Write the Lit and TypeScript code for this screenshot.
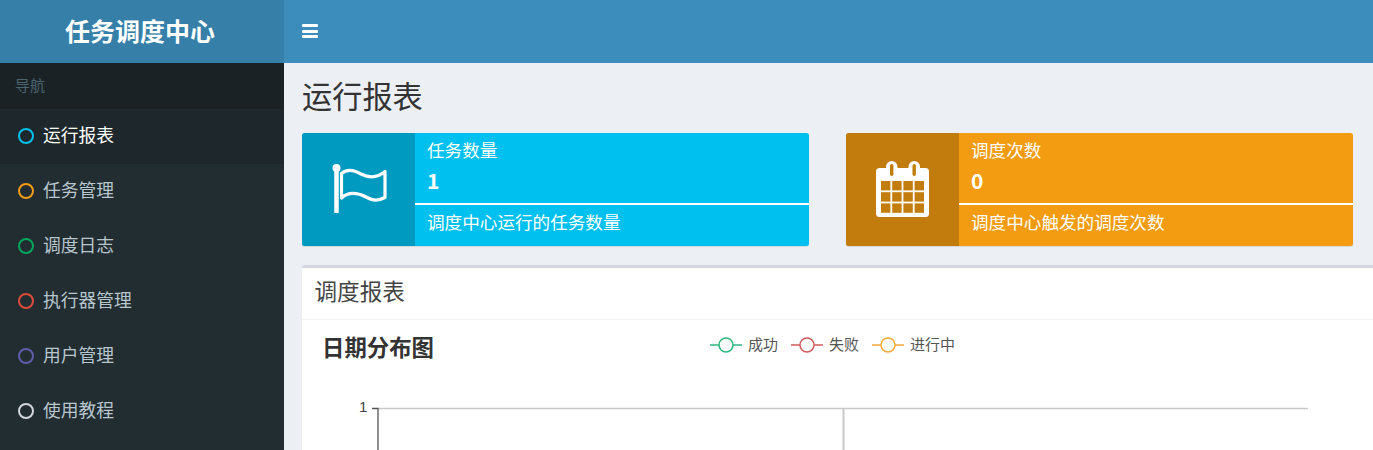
import { LitElement, html, css, svg } from "lit";
import { customElement } from "lit/decorators.js";

const MENU = [
  { label: "运行报表", color: "#00c0ef", active: true },
  { label: "任务管理", color: "#f39c12" },
  { label: "调度日志", color: "#00a65a" },
  { label: "执行器管理", color: "#dd4b39" },
  { label: "用户管理", color: "#605ca8" },
  { label: "使用教程", color: "#d2d6de" },
];

const LEGEND = [
  { label: "成功", color: "#2fb67c" },
  { label: "失败", color: "#cf5c5c" },
  { label: "进行中", color: "#f5a93b" },
];

const flagIcon = html`<svg class="ico" width="60" height="60" viewBox="0 0 60 60" fill="none" stroke="#fff">
  <circle cx="6.5" cy="8" r="4" fill="#fff" stroke="none"></circle>
  <path d="M6.5 8V53" stroke-width="4.5"></path>
  <path stroke-width="3.2" stroke-linejoin="round" d="M11.5 13.5C16 9.5 23 9.5 31 14C40 18.5 48 17.5 55 11.5V37.5C48 41 44 41 36 37C27 32.5 18 32 11.5 38Z"></path>
</svg>`;

const calendarCells = [0, 1, 2, 3].flatMap((c) =>
  [0, 1, 2].map((r) => svg`<rect x=${7 + c * 11.2} y=${21 + r * 11.2} width="9.4" height="9.4"></rect>`)
);

const calendarIcon = html`<svg class="ico" width="60" height="60" viewBox="0 0 60 60">
  <rect x="2" y="8" width="53" height="49" rx="3.5" fill="#fff"></rect>
  <rect x="12" y="1" width="11.5" height="16" rx="5.7" fill="#fff"></rect>
  <rect x="34.5" y="1" width="11.5" height="16" rx="5.7" fill="#fff"></rect>
  <g fill="#c27d0e">
    <rect x="16" y="4" width="3.4" height="12" rx="1.7"></rect>
    <rect x="38.5" y="4" width="3.4" height="12" rx="1.7"></rect>
    ${calendarCells}
  </g>
</svg>`;

@customElement("app-root")
export class AppRoot extends LitElement {
  static styles = css`
    :host {
      display: flex;
      width: 100%;
      height: 450px;
      overflow: hidden;
      background: #ecf0f5;
      font-family: "Noto Sans CJK SC", "Liberation Sans", sans-serif;
      color: #333;
    }
    .side {
      width: 284px;
      flex: none;
      background: #222d32;
      display: flex;
      flex-direction: column;
    }
    .logo {
      height: 63px;
      box-sizing: border-box;
      padding: 0 4px 4px 0;
      flex: none;
      background: #367fa9;
      color: #fff;
      font-size: 25px;
      font-weight: 700;
      display: flex;
      align-items: center;
      justify-content: center;
    }
    .nav-label {
      height: 46px;
      box-sizing: border-box;
      padding: 0 0 4px 15px;
      flex: none;
      background: #1a2226;
      color: #4b646f;
      font-size: 15px;
      display: flex;
      align-items: center;
    }
    .item {
      height: 55px;
      box-sizing: border-box;
      flex: none;
      display: flex;
      align-items: center;
      padding: 0 0 1px 18px;
      gap: 9px;
      color: #b8c7ce;
      font-size: 17.75px;
    }
    .item.active {
      background: #1e282c;
      color: #fff;
    }
    .item-label {
      margin-bottom: 5px;
    }
    .dot {
      width: 16px;
      height: 16px;
      box-sizing: border-box;
      border: 2.85px solid;
      border-radius: 50%;
      flex: none;
    }
    .main {
      flex: 1;
      min-width: 0;
      display: flex;
      flex-direction: column;
    }
    .top {
      height: 63px;
      box-sizing: border-box;
      padding: 0 0 1px 18px;
      flex: none;
      background: #3c8dbc;
      display: flex;
      align-items: center;
    }
    .bars {
      width: 16px;
      display: flex;
      flex-direction: column;
      gap: 2.5px;
    }
    .bars i {
      display: block;
      height: 3px;
      background: #fff;
      border-radius: 1px;
    }
    .content {
      padding: 0 20px 0 18px;
    }
    h1 {
      margin: 0;
      height: 70px;
      font-size: 30.2px;
      font-weight: 400;
      line-height: 65px;
      color: #333;
    }
    .cards {
      display: grid;
      grid-template-columns: 1fr 1fr;
      gap: 37px;
    }
    .card {
      height: 113px;
      display: flex;
      border-radius: 2.5px;
      overflow: hidden;
      color: #fff;
      box-shadow: 0 1px 1px rgba(0, 0, 0, 0.1);
    }
    .card.info { background: #00c0ef; }
    .card.warn { background: #f39c12; }
    .card-icon {
      width: 113px;
      flex: none;
      background: rgba(0, 0, 0, 0.2);
      display: flex;
      align-items: center;
      justify-content: center;
    }
    .card.info .ico { margin: 1px 0 0 3px; }
    .card.warn .ico { margin: 1px 0 0 3px; }
    .card-body {
      flex: 1;
      min-width: 0;
      display: flex;
      flex-direction: column;
    }
    .card-text {
      height: 35px;
      padding: 0 12px 0 13px;
      margin-left: -1px;
      font-size: 17.6px;
      line-height: 34px;
    }
    .card-num {
      height: 35px;
      padding: 0 12px 0 13px;
      margin-left: -1px;
      font-size: 21px;
      font-weight: 700;
      line-height: 25px;
    }
    .card-line {
      height: 2px;
      background: #fff;
    }
    .card-desc {
      padding: 0 12px 0 13px;
      margin-left: -1px;
      font-size: 17.6px;
      line-height: 34px;
    }
    .box {
      margin: 19px -20px 0 0;
      background: #fff;
      border-top: 3px solid #d2d6de;
      border-radius: 3px 0 0 3px;
      box-shadow: 0 1px 1px rgba(0, 0, 0, 0.1);
    }
    .box-head {
      height: 52px;
      box-sizing: border-box;
      border-bottom: 1px solid #f4f4f4;
      padding-left: 12.5px;
      font-size: 22.6px;
      line-height: 46px;
      color: #444;
    }
    .chart-head {
      height: 53px;
      display: flex;
      align-items: center;
      padding-left: 20px;
    }
    .chart-title {
      width: 388px;
      font-size: 22.4px;
      font-weight: 700;
      color: #333;
      margin-top: -2px;
    }
    .legend {
      display: flex;
      gap: 13px;
      margin-top: -4px;
      font-size: 15px;
      color: #555;
    }
    .leg {
      display: flex;
      align-items: center;
      gap: 6px;
    }
    .leg span {
      margin-bottom: 2px;
    }
    .plot {
      display: block;
    }
    .tick {
      font-family: "Liberation Sans", sans-serif;
      font-size: 15px;
      fill: #444;
    }
  `;

  render() {
    return html`
      <aside class="side">
        <div class="logo">任务调度中心</div>
        <div class="nav-label">导航</div>
        ${MENU.map(
          (m) => html`<div class="item ${m.active ? "active" : ""}">
            <span class="dot" style="border-color:${m.color}"></span><span class="item-label">${m.label}</span>
          </div>`
        )}
      </aside>
      <div class="main">
        <header class="top"><div class="bars"><i></i><i></i><i></i></div></header>
        <section class="content">
          <h1>运行报表</h1>
          <div class="cards">
            <div class="card info">
              <div class="card-icon">${flagIcon}</div>
              <div class="card-body">
                <div class="card-text">任务数量</div>
                <div class="card-num">1</div>
                <div class="card-line"></div>
                <div class="card-desc">调度中心运行的任务数量</div>
              </div>
            </div>
            <div class="card warn">
              <div class="card-icon">${calendarIcon}</div>
              <div class="card-body">
                <div class="card-text">调度次数</div>
                <div class="card-num">0</div>
                <div class="card-line"></div>
                <div class="card-desc">调度中心触发的调度次数</div>
              </div>
            </div>
          </div>
          <div class="box">
            <div class="box-head">调度报表</div>
            <div class="chart-head">
              <div class="chart-title">日期分布图</div>
              <div class="legend">
                ${LEGEND.map(
                  (l) => html`<span class="leg">
                    <svg width="32" height="16" viewBox="0 0 32 16" fill="none" stroke=${l.color} stroke-width="1.5">
                      <path d="M0 8H32"></path>
                      <circle cx="16" cy="8" r="7" fill="#fff"></circle>
                    </svg><span>${l.label}</span>
                  </span>`
                )}
              </div>
            </div>
            <svg class="plot" width="1071" height="80" viewBox="0 0 1071 80" fill="none">
              <text class="tick" x="57" y="39">1</text>
              <path d="M76 35.5H1006" stroke="#c8c8c8" stroke-width="1.5"></path>
              <path d="M541.5 35V80" stroke="#c8c8c8" stroke-width="2"></path>
              <path d="M70 35.5H76.5M76 35V80" stroke="#555" stroke-width="1.3"></path>
            </svg>
          </div>
        </section>
      </div>
    `;
  }
}
